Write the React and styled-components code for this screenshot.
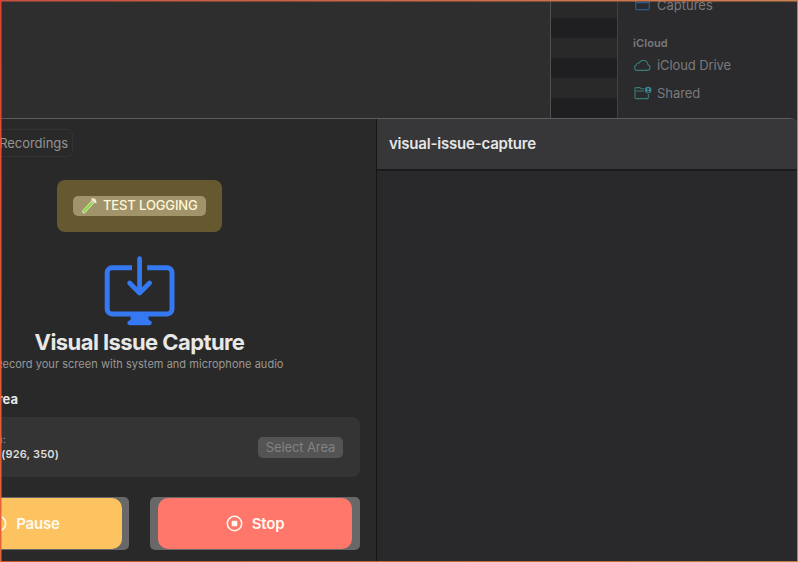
import React from "react";
import styled, { createGlobalStyle } from "styled-components";

const GlobalStyle = createGlobalStyle`
  * { box-sizing: border-box; }
  body { margin: 0; background: #29292a; font-family: Inter, "Liberation Sans", sans-serif; }
  svg { display: block; flex: none; }
`;

const Screen = styled.div`
  position: relative;
  display: flex;
  flex-direction: column;
  width: 798px;
  height: 562px;
  overflow: hidden;
  background: #29292a;
`;

const CaptureFrame = styled.div`
  position: absolute;
  inset: 0;
  background:
    linear-gradient(#e0432f, #e5643a) left / 1.5px 100% no-repeat,
    linear-gradient(90deg, #c8503f, #cd8050) top / 100% 1.5px no-repeat,
    linear-gradient(#c17c4c, #b58450) right / 1.5px 100% no-repeat,
    linear-gradient(90deg, #c8552c, #b57a43) bottom / 100% 1.5px no-repeat;
  pointer-events: none;
`;

const Backdrop = styled.div`
  display: flex;
  flex: 0 0 118px;
  overflow: hidden;
`;

const BackWindow = styled.div`
  width: 551px;
  background: #2e2e2e;
  border-right: 1px solid #505050;
`;

const StripedList = styled.div`
  width: 66px;
  background: repeating-linear-gradient(#29292a 0 20px, #1f1f21 20px 40px);
  background-position: 0 -2px;
  background-size: 100% 200px;
`;

const Sidebar = styled.div`
  flex: 1;
  padding-left: 15px;
  border-left: 1px solid #424244;
  background: #2b2b2d;
  color: #7a7a7c;
`;

const SidebarItem = styled.div`
  display: flex;
  align-items: center;
  gap: 5px;
  height: 28px;
  margin-top: ${(p) => p.$offset || 0}px;
  font-size: 13px;
  letter-spacing: ${(p) => p.$tracking || 0}px;
  white-space: nowrap;
`;

const SidebarHeading = styled.div`
  height: 14px;
  margin: 17px 0 0;
  font-size: 11px;
  font-weight: 600;
  letter-spacing: 0.1px;
  line-height: 14px;
`;

const Window = styled.div`
  display: flex;
  flex: 1;
  border-top: 1px solid #5c5c5e;
  border-top-right-radius: 8px;
  overflow: hidden;
`;

const ControlPane = styled.section`
  display: flex;
  flex: none;
  flex-direction: column;
  width: 474px;
  margin-left: -97px;
  padding: 10px 16px 0;
  border-right: 1px solid #151516;
  background: #292929;
`;

const RecordingsButton = styled.div`
  display: flex;
  align-items: center;
  justify-content: flex-end;
  width: 154px;
  height: 28px;
  padding-right: 4px;
  border: 1px solid #333334;
  border-radius: 6px;
  color: #949494;
  font-size: 13px;
  letter-spacing: -0.05px;
`;

const LoggingPanel = styled.div`
  display: flex;
  align-items: center;
  justify-content: center;
  align-self: center;
  width: 165px;
  height: 52px;
  margin-top: 23px;
  border-radius: 8px;
  background: #665930;
`;

const LoggingButton = styled.div`
  display: flex;
  align-items: center;
  gap: 5px;
  width: 133px;
  height: 20px;
  padding: 0 0 1px 8px;
  border-radius: 5px;
  background: #a1946a;
  color: #fff7db;
  font-size: 13px;
  font-weight: 500;
  letter-spacing: -0.13px;
  line-height: 19px;
  white-space: nowrap;
`;

const AppMark = styled.div`
  align-self: center;
  margin-top: 24px;
`;

const Title = styled.h1`
  align-self: center;
  height: 28px;
  margin: 2px 0 0;
  color: #e8e8e8;
  font-size: 22px;
  font-weight: 700;
  letter-spacing: -0.58px;
  line-height: 28px;
`;

const Subtitle = styled.p`
  align-self: center;
  height: 14px;
  margin: 1px 0 0;
  color: #989898;
  font-size: 11px;
  letter-spacing: 0.035px;
  line-height: 14px;
  white-space: nowrap;
`;

const SectionTitle = styled.h2`
  width: 99px;
  margin: 20px 0 0;
  color: #e8e8e8;
  font-size: 13px;
  font-weight: 700;
  line-height: 16px;
  text-align: right;
  white-space: nowrap;
`;

const AreaCard = styled.div`
  display: flex;
  align-items: center;
  justify-content: space-between;
  height: 60px;
  margin-top: 10px;
  padding: 0 17px 0 0;
  border-radius: 8px;
  background: #343434;
`;

const AreaInfo = styled.div`
  width: 140px;
  color: #dedede;
  font-size: 11px;
  font-weight: 600;
  line-height: 15px;
  text-align: right;
  letter-spacing: 0.18px;
`;

const AreaLabel = styled.div`
  width: 87px;
  color: #999;
  font-size: 10px;
  font-weight: 400;
`;

const SelectButton = styled.div`
  width: 85px;
  height: 21px;
  border-radius: 5px;
  background: #545454;
  color: #828282;
  font-size: 13px;
  letter-spacing: -0.1px;
  line-height: 20px;
  text-align: center;
`;

const Actions = styled.div`
  display: grid;
  grid-template-columns: 1fr 1fr;
  gap: 21px;
  margin-top: 20px;
`;

const ActionShell = styled.div`
  height: 53px;
  padding: 1px 8px 1px 8px;
  border-radius: 5px;
  background: #686868;

  &:first-child { padding: 1px 7px 1px 9px; }
`;

const Action = styled.div`
  display: flex;
  align-items: center;
  justify-content: center;
  gap: 9px;
  height: 51px;
  border-radius: 10px;
  background: ${(p) => p.$color};
  color: #fff9f1;
  font-size: 15px;
  font-weight: 600;
  letter-spacing: -0.2px;
`;

const DetailPane = styled.section`
  flex: 1;
  background: #29292b;
`;

const DetailHeader = styled.header`
  height: 52px;
  padding-left: 12px;
  border-bottom: 2px solid #1c1c1d;
  background: #373739;
  color: #e5e5e6;
  font-size: 15px;
  font-weight: 600;
  letter-spacing: -0.2px;
  line-height: 49px;
`;

const FolderIcon = () => (
  <svg width="19" height="16" viewBox="0 0 19 16" fill="none" stroke="#2b5c8f" strokeWidth="1.2">
    <path d="M2.7 1v10.5A1.1 1.1 0 0 0 3.8 12.6h11.4a1.1 1.1 0 0 0 1.1-1.1V1M2.7 5.7h13.6" />
  </svg>
);

const CloudIcon = () => (
  <svg width="19" height="16" viewBox="0 0 19 16" fill="none" stroke="#387d78" strokeWidth="1.1">
    <path d="M4.7 13.4h9.4a2.9 2.9 0 0 0 .8-5.7 4.6 4.6 0 0 0-8.7-1.8A2.4 2.4 0 0 0 3.4 8a2.8 2.8 0 0 0 1.3 5.4Z" />
  </svg>
);

const SharedIcon = () => (
  <svg width="19" height="16" viewBox="0 0 19 16" fill="none" stroke="#387d78" strokeWidth="1.1">
    <path d="M11.5 3.8H8L6.8 2.6H3A1 1 0 0 0 2 3.6v8.8A1.2 1.2 0 0 0 3.2 13.6h11a1.2 1.2 0 0 0 1.2-1.2V9M2 6h9" />
    <circle cx="15.2" cy="5" r="3.2" fill="#398894" stroke="none" />
    <circle cx="15.2" cy="4" r="1" fill="#2b2b2d" stroke="none" />
    <path d="M13.6 7.2c.3-1.7 2.9-1.7 3.2 0Z" fill="#2b2b2d" stroke="none" />
  </svg>
);

const TubeIcon = () => (
  <svg width="17" height="18" viewBox="0 0 17 18" strokeLinecap="round">
    <path d="M3 14.5 13.2 3.3" stroke="#dfe5b8" strokeWidth="3.8" />
    <path d="M3.2 14.2 12.8 3.8" stroke="#c5caa0" strokeWidth="2.2" />
    <path d="M3.2 14.2 10.3 6.5" stroke="#8fdc50" strokeWidth="2.5" />
    <path d="m11 1.8 3.9 3.6" stroke="#f2f0dc" strokeWidth="1.5" />
  </svg>
);

const CaptureIcon = () => (
  <svg width="71" height="70" viewBox="0 0 71 70" fill="none" stroke="#3478f2" strokeWidth="5" strokeLinejoin="round">
    <path d="M28 11.8H8a4.8 4.8 0 0 0-4.8 4.8V53.2A4.8 4.8 0 0 0 8 58h55.2A4.8 4.8 0 0 0 68 53.2V16.6a4.8 4.8 0 0 0-4.8-4.8H43.2" />
    <path d="M35.6 2.7V36.6M25.6 27l10 10 10-10" strokeWidth="4.7" strokeLinecap="round" />
    <path d="M26.6 58h18v5.8l2.2 1.2c1.9 1.4 1 4.2-1.4 4.2H25.8c-2.4 0-3.3-2.8-1.4-4.2l2.2-1.2Z" fill="#3478f2" stroke="none" />
  </svg>
);

const PauseIcon = () => (
  <svg width="17" height="17" viewBox="0 0 17 17" fill="none" stroke="#fff9f1" strokeWidth="1.6">
    <circle cx="8.5" cy="8.5" r="7.2" />
    <path d="M6.6 5.8v5.4M10.4 5.8v5.4" strokeLinecap="round" />
  </svg>
);

const StopIcon = () => (
  <svg width="17" height="17" viewBox="0 0 17 17" fill="none" stroke="#fff9f1" strokeWidth="1.5">
    <circle cx="8.5" cy="8.5" r="7.2" />
    <rect x="5.7" y="5.7" width="5.6" height="5.6" rx="0.7" fill="#fff9f1" stroke="none" />
  </svg>
);

export default function App() {
  return (
    <>
      <GlobalStyle />
      <Screen>
        <Backdrop>
          <BackWindow />
          <StripedList />
          <Sidebar>
            <SidebarItem $offset={-9}><FolderIcon />Captures</SidebarItem>
            <SidebarHeading>iCloud</SidebarHeading>
            <SidebarItem $offset={1} $tracking={-0.1}><CloudIcon />iCloud Drive</SidebarItem>
            <SidebarItem $tracking={-0.05}><SharedIcon />Shared</SidebarItem>
          </Sidebar>
        </Backdrop>
        <Window>
          <ControlPane>
            <RecordingsButton>Recordings</RecordingsButton>
            <LoggingPanel>
              <LoggingButton><TubeIcon />TEST LOGGING</LoggingButton>
            </LoggingPanel>
            <AppMark><CaptureIcon /></AppMark>
            <Title>Visual Issue Capture</Title>
            <Subtitle>Record your screen with system and microphone audio</Subtitle>
            <SectionTitle>Recording Area</SectionTitle>
            <AreaCard>
              <AreaInfo>
                <AreaLabel>Position:</AreaLabel>
                (926, 350)
              </AreaInfo>
              <SelectButton>Select Area</SelectButton>
            </AreaCard>
            <Actions>
              <ActionShell><Action $color="#fdc360"><PauseIcon />Pause</Action></ActionShell>
              <ActionShell><Action $color="#ff776a"><StopIcon />Stop</Action></ActionShell>
            </Actions>
          </ControlPane>
          <DetailPane>
            <DetailHeader>visual-issue-capture</DetailHeader>
          </DetailPane>
        </Window>
        <CaptureFrame />
      </Screen>
    </>
  );
}
